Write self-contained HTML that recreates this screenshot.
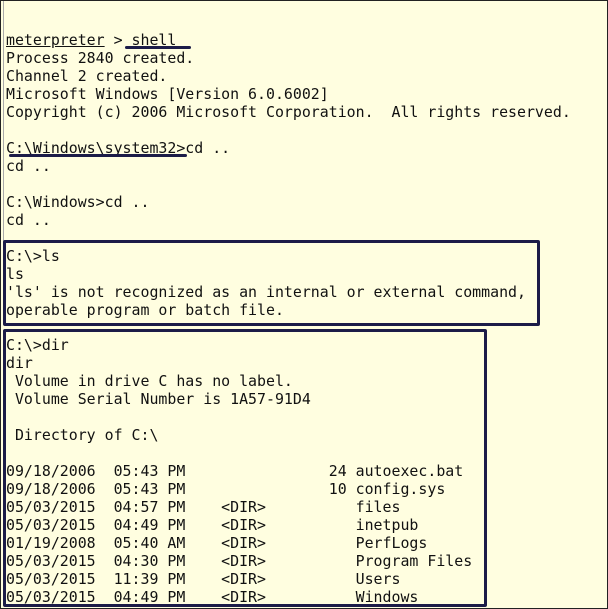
<!DOCTYPE html>
<html><head><style>
html,body{margin:0;padding:0}
body{width:608px;height:609px;overflow:hidden;background:#fffee0;position:relative;box-sizing:border-box;border:1px solid #222;}
pre{position:absolute;left:5px;top:31px;margin:0;font-family:"DejaVu Sans Mono","Liberation Mono",monospace;font-size:14.9px;line-height:17.97px;color:#111;}
.b{position:absolute;border:3px solid #1c1c48;border-radius:2px;}
.u{position:absolute;height:3px;background:#1c1c48;border-radius:2px;}
.l{position:absolute;left:2px;top:0;width:1px;height:240px;background:#aaa;}
</style></head><body>
<div class="l"></div>
<pre><u>meterpreter</u> &gt; shell
Process 2840 created.
Channel 2 created.
Microsoft Windows [Version 6.0.6002]
Copyright (c) 2006 Microsoft Corporation.  All rights reserved.

C:\Windows\system32&gt;cd ..
cd ..

C:\Windows&gt;cd ..
cd ..

C:\&gt;ls
ls
'ls' is not recognized as an internal or external command,
operable program or batch file.

C:\&gt;dir
dir
 Volume in drive C has no label.
 Volume Serial Number is 1A57-91D4

 Directory of C:\

09/18/2006  05:43 PM                24 autoexec.bat
09/18/2006  05:43 PM                10 config.sys
05/03/2015  04:57 PM    &lt;DIR&gt;          files
05/03/2015  04:49 PM    &lt;DIR&gt;          inetpub
01/19/2008  05:40 AM    &lt;DIR&gt;          PerfLogs
05/03/2015  04:30 PM    &lt;DIR&gt;          Program Files
05/03/2015  11:39 PM    &lt;DIR&gt;          Users
05/03/2015  04:49 PM    &lt;DIR&gt;          Windows</pre>
<div class="u" style="left:124px;top:45px;width:66px"></div>
<div class="u" style="left:8px;top:153px;width:178px"></div>
<div class="b" style="left:2px;top:239px;width:531px;height:80px"></div>
<div class="b" style="left:2px;top:328px;width:478px;height:272px"></div>
</body></html>
